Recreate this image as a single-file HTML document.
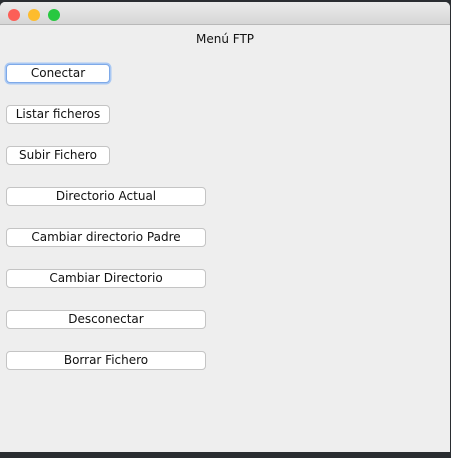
<!DOCTYPE html>
<html><head><style>
body{margin:0;width:451px;height:458px;background:#2a2d31;position:relative;overflow:hidden;font-family:"DejaVu Sans","Liberation Sans",sans-serif}
.win{position:absolute;left:0;top:2px;width:450px;height:450px;background:#eeeeee;border-radius:5px 5px 0 0;overflow:hidden}
.tb{height:22px;background:linear-gradient(#ebebeb,#d6d6d6);border-bottom:1px solid #b8b8b8}
.dot{position:absolute;top:7px;width:12px;height:12px;border-radius:50%}
.title{position:absolute;top:30px;left:0;width:450px;text-align:center;font-size:12px;color:#111}
.b{position:absolute;left:6px;height:17px;background:#fff;border:1px solid #c4c4c4;border-radius:4px;font-size:12px;line-height:17px;text-align:center;color:#111;box-sizing:content-box}
.s{width:102px}.l{width:198px}
.f{border:1px solid #7ea9e8;box-shadow:0 0 0 1.5px #a9c8f3}
</style></head><body>
<div class="win">
<div class="tb"></div>
<div class="dot" style="left:8px;background:#fc5f57"></div>
<div class="dot" style="left:28px;background:#fdbc2e"></div>
<div class="dot" style="left:48px;background:#28c840"></div>
<div class="title">Menú FTP</div>
<div class="b s f" style="top:62px">Conectar</div>
<div class="b s" style="top:103px">Listar ficheros</div>
<div class="b s" style="top:144px">Subir Fichero</div>
<div class="b l" style="top:185px">Directorio Actual</div>
<div class="b l" style="top:226px">Cambiar directorio Padre</div>
<div class="b l" style="top:267px">Cambiar Directorio</div>
<div class="b l" style="top:308px">Desconectar</div>
<div class="b l" style="top:349px">Borrar Fichero</div>
</div>
</body></html>
